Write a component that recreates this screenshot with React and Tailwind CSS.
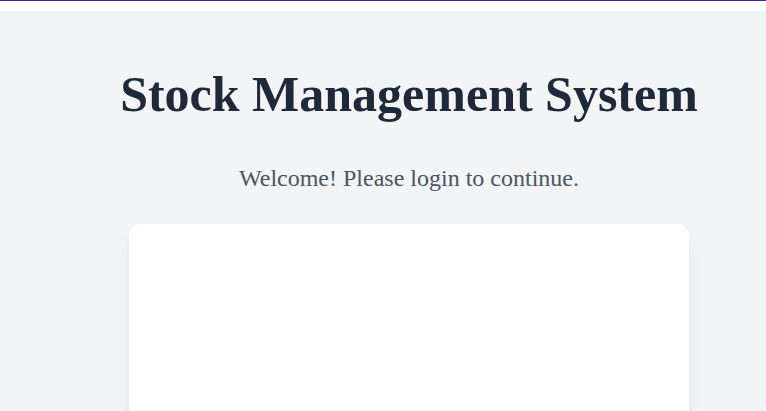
export default function App() {
  return (
    <div className="min-h-screen bg-white" style={{ fontFamily: '"Liberation Serif", serif' }}>
      <div className="h-px bg-[#4c1d95]" />
      <div className="mt-[10px] min-h-[600px] bg-gray-100 pl-[52px]">
        <div className="flex flex-col items-center pt-[53px]">
          <h1 className="text-[50px] font-bold leading-[1.2] text-gray-800">Stock Management System</h1>
          <p className="mt-[36px] text-[24px] leading-[1.5] text-gray-600">Welcome! Please login to continue.</p>
          <div className="mt-[28px] h-[300px] w-[560px] rounded-xl bg-white shadow-lg" />
        </div>
      </div>
    </div>
  );
}
